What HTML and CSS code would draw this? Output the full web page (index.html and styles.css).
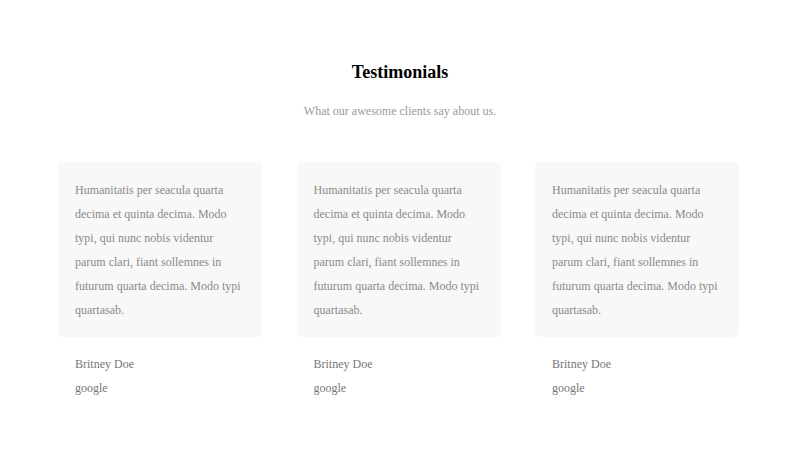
FILE: index.html
```html
<!DOCTYPE html>
<html>
<head>
<meta charset="utf-8">
<link rel="stylesheet" href="styles.css">
</head>
<body>
<section class="testimonials">
  <h2 class="title">Testimonials</h2>
  <p class="subtitle">What our awesome clients say about us.</p>
  <div class="grid">
    <div class="item">
      <div class="card">Humanitatis per seacula quarta decima et quinta decima. Modo typi, qui nunc nobis videntur parum clari, fiant sollemnes in futurum quarta decima. Modo typi quartasab.</div>
      <div class="author">
        <div class="name">Britney Doe</div>
        <div class="company">google</div>
      </div>
    </div>
    <div class="item">
      <div class="card">Humanitatis per seacula quarta decima et quinta decima. Modo typi, qui nunc nobis videntur parum clari, fiant sollemnes in futurum quarta decima. Modo typi quartasab.</div>
      <div class="author">
        <div class="name">Britney Doe</div>
        <div class="company">google</div>
      </div>
    </div>
    <div class="item">
      <div class="card">Humanitatis per seacula quarta decima et quinta decima. Modo typi, qui nunc nobis videntur parum clari, fiant sollemnes in futurum quarta decima. Modo typi quartasab.</div>
      <div class="author">
        <div class="name">Britney Doe</div>
        <div class="company">google</div>
      </div>
    </div>
  </div>
</section>
</body>
</html>
```

FILE: styles.css
```css
html, body {
  margin: 0;
  padding: 0;
  background: #ffffff;
  font-family: "Liberation Serif", "Times New Roman", serif;
}
.testimonials {
  padding-top: 60px;
  display: flex;
  flex-direction: column;
  align-items: center;
}
.title {
  margin: 0;
  font-size: 18px;
  line-height: 24px;
  font-weight: bold;
  color: #000;
}
.subtitle {
  margin: 15px 0 0 0;
  font-size: 12px;
  line-height: 24px;
  color: #999;
}
.grid {
  margin-top: 39px;
  display: grid;
  grid-template-columns: 204px 204px 204px;
  column-gap: 34.5px;
  margin-left: -3px;
}
.card {
  background: #f8f8f8;
  border-radius: 5px;
  padding: 16px 17px 15px 17px;
  font-size: 12px;
  line-height: 24px;
  color: #8a8a8a;
}
.author {
  padding: 15px 17px 0 17px;
  font-size: 12px;
  line-height: 24px;
  color: #777;
}
```
